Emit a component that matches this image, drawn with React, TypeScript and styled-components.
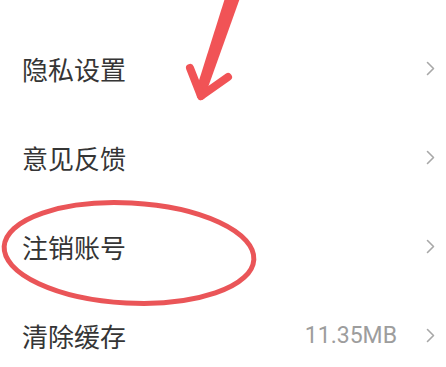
import React from 'react'
import styled, { createGlobalStyle } from 'styled-components'

const GlobalStyle = createGlobalStyle`
  html, body {
    margin: 0;
    padding: 0;
    background: #ffffff;
  }
  body {
    font-family: 'Noto Sans CJK SC', 'Noto Sans', sans-serif;
  }
`

type Item = {
  label: string
  value?: string
}

const items: Item[] = [
  { label: '隐私设置' },
  { label: '意见反馈' },
  { label: '注销账号' },
  { label: '清除缓存', value: '11.35MB' },
]

const Page = styled.div`
  position: relative;
  width: 446px;
  height: 367px;
  overflow: hidden;
  background: #ffffff;
`

const List = styled.ul`
  list-style: none;
  margin: 0;
  padding: 24px 0 0;
  display: flex;
  flex-direction: column;
`

const Row = styled.li`
  height: 89px;
  display: flex;
  align-items: center;
  padding: 0 11px 0 22px;
`

const Label = styled.span`
  flex: 1;
  font-size: 26px;
  line-height: 1;
  color: #353535;
`

const Value = styled.span`
  font-family: Roboto, 'Noto Sans', sans-serif;
  font-size: 23px;
  line-height: 1;
  color: #9d9d9d;
  margin-right: 29px;
`

const Chevron = styled.svg`
  width: 9px;
  height: 15px;
  flex: none;
`

const Annotation = styled.svg`
  position: absolute;
  left: 0;
  top: 0;
  pointer-events: none;
`

const RowChevron = () => (
  <Chevron viewBox='0 0 9 15'>
    <polyline
      points='1.5,1.5 7.5,7.5 1.5,13.5'
      fill='none'
      stroke='#a8a8a8'
      strokeWidth='1.6'
      strokeLinecap='round'
      strokeLinejoin='round'
    />
  </Chevron>
)

export default function App() {
  return (
    <Page>
      <GlobalStyle />
      <List>
        {items.map((item) => (
          <Row key={item.label}>
            <Label>{item.label}</Label>
            {item.value && <Value>{item.value}</Value>}
            <RowChevron />
          </Row>
        ))}
      </List>
      <Annotation width='446' height='367' viewBox='0 0 446 367'>
        {/* arrow */}
        <polygon points='225,-2 240,-2 206,93 196,90' fill='#f15356' />
        <line
          x1='190'
          y1='68'
          x2='201'
          y2='96'
          stroke='#f15356'
          strokeWidth='8'
          strokeLinecap='round'
        />
        <line
          x1='228'
          y1='77'
          x2='201'
          y2='96'
          stroke='#f15356'
          strokeWidth='8'
          strokeLinecap='round'
        />
        {/* circle around 注销账号 */}
        <ellipse
          cx='129'
          cy='253'
          rx='125'
          ry='50'
          transform='rotate(3 129 253)'
          fill='none'
          stroke='#ea5558'
          strokeWidth='5'
        />
      </Annotation>
    </Page>
  )
}
